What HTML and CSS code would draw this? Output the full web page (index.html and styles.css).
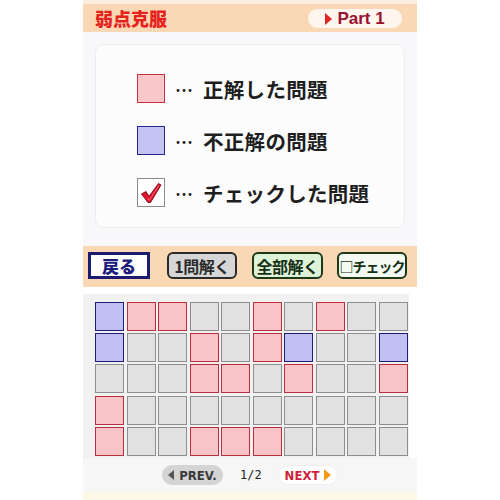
FILE: index.html
```html
<!DOCTYPE html>
<html lang="ja">
<head>
<meta charset="utf-8">
<link rel="stylesheet" href="styles.css">
</head>
<body>
<div class="screen">
  <header class="header">
    <h1 class="title">弱点克服</h1>
    <div class="part"><span class="tri tri-red"></span>Part 1</div>
  </header>

  <main class="main">
    <section class="card">
      <div class="legend-row">
        <span class="swatch swatch-red"></span>
        <span class="dots">…</span>
        <span class="legend-text">正解した問題</span>
      </div>
      <div class="legend-row">
        <span class="swatch swatch-blue"></span>
        <span class="dots">…</span>
        <span class="legend-text">不正解の問題</span>
      </div>
      <div class="legend-row">
        <span class="checkbox">
          <svg width="24" height="24" viewBox="0 0 24 24"><path d="M2.5 13 L7 10.5 L10 15.5 L19.5 2.5 L22 4 L11.5 21.5 L9 21.5 Z" fill="#e0142e" stroke="#7a0010" stroke-width="0.9" stroke-linejoin="round"/><path d="M8.5 17 L10.3 19.5 L19.8 4.5" fill="none" stroke="#ff7a88" stroke-width="0.8"/></svg>
        </span>
        <span class="dots">…</span>
        <span class="legend-text">チェックした問題</span>
      </div>
    </section>
  </main>

  <nav class="toolbar">
    <button class="btn btn-back">戻る</button>
    <button class="btn btn-one">1問解く</button>
    <button class="btn btn-all">全部解く</button>
    <button class="btn btn-check">□チェック</button>
  </nav>

  <section class="grid-wrap">
    <div class="grid">
      <span class="cell b"></span><span class="cell r"></span><span class="cell r"></span><span class="cell g"></span><span class="cell g"></span><span class="cell r"></span><span class="cell g"></span><span class="cell r"></span><span class="cell g"></span><span class="cell g"></span>
      <span class="cell b"></span><span class="cell g"></span><span class="cell g"></span><span class="cell r"></span><span class="cell g"></span><span class="cell r"></span><span class="cell b"></span><span class="cell g"></span><span class="cell g"></span><span class="cell b"></span>
      <span class="cell g"></span><span class="cell g"></span><span class="cell g"></span><span class="cell r"></span><span class="cell r"></span><span class="cell g"></span><span class="cell r"></span><span class="cell g"></span><span class="cell g"></span><span class="cell r"></span>
      <span class="cell r"></span><span class="cell g"></span><span class="cell g"></span><span class="cell g"></span><span class="cell g"></span><span class="cell g"></span><span class="cell g"></span><span class="cell g"></span><span class="cell g"></span><span class="cell g"></span>
      <span class="cell r"></span><span class="cell g"></span><span class="cell g"></span><span class="cell r"></span><span class="cell r"></span><span class="cell r"></span><span class="cell g"></span><span class="cell g"></span><span class="cell g"></span><span class="cell g"></span>
    </div>
  </section>

  <footer class="pager">
    <span class="pill pill-prev"><span class="tri-left"></span>PREV.</span>
    <span class="page">1/2</span>
    <span class="pill pill-next">NEXT<span class="tri tri-orange"></span></span>
  </footer>
  <div class="bottom-strip"></div>
</div>
</body>
</html>
```

FILE: styles.css
```css
* { box-sizing: border-box; }
html, body { margin: 0; padding: 0; background: #ffffff; }
body {
  font-family: "Noto Sans CJK JP", "Liberation Sans", sans-serif;
}
.screen {
  width: 334px;
  height: 500px;
  margin: 0 auto;
  display: flex;
  flex-direction: column;
  background: #f8f8fa;
}
.header {
  height: 32px;
  flex: none;
  border-top: 4px solid #fbeedf;
  background: #fad8b6;
  display: flex;
  align-items: center;
  justify-content: space-between;
  padding: 0 15px 0 12px;
}
.title {
  margin: 0;
  font-size: 18px;
  font-weight: 900;
  color: #e5231c;
  line-height: 1;
}
.part {
  width: 94px;
  height: 19px;
  margin-top: 1px;
  border-radius: 10px;
  background: #fdf5ee;
  color: #9a1030;
  font-family: "Liberation Sans", sans-serif;
  font-weight: 700;
  font-size: 17px;
  display: flex;
  align-items: center;
  justify-content: center;
  gap: 5px;
}
.tri {
  display: inline-block;
  width: 0;
  height: 0;
  border-top: 6px solid transparent;
  border-bottom: 6px solid transparent;
  border-left: 7px solid #e02420;
}
.tri-orange { border-left-color: #f59a1a; }
.main {
  height: 214px;
  flex: none;
  padding: 12px 12px 0 12px;
}
.card {
  height: 184px;
  background: #fcfcfc;
  border: 1px solid #eeeef0;
  border-radius: 9px;
  display: flex;
  flex-direction: column;
  padding: 29px 0 0 41px;
  gap: 23px;
}
.legend-row {
  display: flex;
  align-items: center;
  height: 29px;
}
.swatch, .checkbox {
  width: 28px;
  height: 29px;
  flex: none;
}
.swatch-red {
  border: 1.5px solid #c8323c;
  background: #f9c6ca;
}
.swatch-blue {
  border: 1.5px solid #26268a;
  background: #c4c4f4;
}
.checkbox {
  background: #ffffff;
  border: 1px solid #8c8c8c;
  display: flex;
  align-items: center;
  justify-content: center;
}
.dots {
  margin-left: 10px;
  width: 28px;
  font-size: 18px;
  font-weight: 700;
  color: #222;
}
.legend-text {
  font-size: 20.5px;
  font-weight: 700;
  color: #1e1e1e;
  letter-spacing: 0.3px;
}
.toolbar {
  height: 41px;
  flex: none;
  background: #fad8b6;
  display: flex;
  align-items: flex-start;
  padding: 6px 0 0 5px;
}
.btn {
  height: 27px;
  font-family: "Noto Sans CJK JP", sans-serif;
  font-weight: 700;
  font-size: 16px;
  padding: 0;
  display: flex;
  align-items: center;
  justify-content: center;
  line-height: 1;
  white-space: nowrap;
  letter-spacing: -0.5px;
}
.btn-back {
  width: 62px;
  background: #ffffff;
  border: 3px solid #1c1c6e;
  color: #1c1c7a;
  font-size: 17px;
  font-weight: 900;
  letter-spacing: 0;
}
.btn-one {
  width: 70px;
  margin-left: 17px;
  background: #d6d6d6;
  border: 2px solid #2a2a2a;
  border-radius: 6px;
  color: #2a2a2a;
}
.btn-all {
  width: 71px;
  margin-left: 15px;
  background: #def2d8;
  border: 2px solid #1a3a1a;
  border-radius: 6px;
  color: #163016;
}
.btn-check {
  width: 70px;
  margin-left: 14px;
  background: #f4faf2;
  border: 2px solid #1a3a1a;
  border-radius: 6px;
  color: #163016;
  font-size: 14px;
  letter-spacing: -1px;
}
.grid-wrap {
  height: 171px;
  flex: none;
  background: #ffffff;
  padding-top: 7px;
}
.grid {
  height: 164px;
  background: #f1f1f1;
  margin-right: 8px;
  padding: 8px 0 0 12px;
  display: grid;
  grid-template-columns: repeat(10, 29px);
  grid-auto-rows: 29px;
  column-gap: 2.5px;
  row-gap: 2.2px;
  align-content: start;
}
.cell { display: block; }
.cell.g {
  border: 1.5px solid #8e8e8e;
  background: #e1e1e1;
}
.cell.r {
  border: 1.5px solid #b83040;
  background: #f9c4c8;
}
.cell.b {
  border: 1.5px solid #1e1e78;
  background: #c0c0f4;
}
.pager {
  height: 34px;
  flex: none;
  background: #f6f6f6;
  display: flex;
  align-items: center;
  padding: 0 0 0 79px;
}
.pill {
  height: 20px;
  border-radius: 10px;
  display: flex;
  align-items: center;
  justify-content: center;
  font-family: "DejaVu Sans Condensed", "Liberation Sans Narrow", sans-serif;
  font-weight: 700;
  font-size: 13px;
  gap: 5px;
}
.pill-prev {
  width: 61px;
  background: #d4d4d4;
  color: #3a3a3a;
}
.tri-left {
  width: 0;
  height: 0;
  border-top: 5px solid transparent;
  border-bottom: 5px solid transparent;
  border-right: 6px solid #555;
}
.page {
  margin-left: 17px;
  width: 38px;
  font-family: "DejaVu Sans Mono", monospace;
  font-size: 12px;
  color: #222;
}
.pill-next {
  width: 60px;
  background: #ffffff;
  border: 1px solid #ededed;
  color: #d01e3a;
}
.bottom-strip {
  flex: 1;
  background: #fdf9e6;
}
```
